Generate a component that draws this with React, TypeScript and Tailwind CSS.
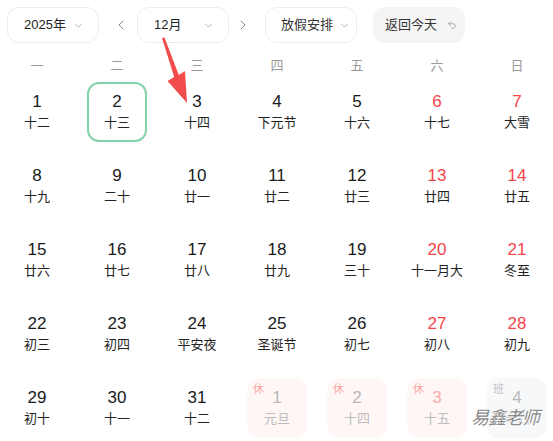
import { ChevronDown, ChevronLeft, ChevronRight, Undo2 } from "lucide-react";

type Day = {
    n: number;
    lunar: string;
    red?: boolean;
    selected?: boolean;
    tag?: "休" | "班";
};

const weekdays = ["一", "二", "三", "四", "五", "六", "日"];

const days: Day[] = [
    { n: 1, lunar: "十二" },
    { n: 2, lunar: "十三", selected: true },
    { n: 3, lunar: "十四" },
    { n: 4, lunar: "下元节" },
    { n: 5, lunar: "十六" },
    { n: 6, lunar: "十七", red: true },
    { n: 7, lunar: "大雪", red: true },
    { n: 8, lunar: "十九" },
    { n: 9, lunar: "二十" },
    { n: 10, lunar: "廿一" },
    { n: 11, lunar: "廿二" },
    { n: 12, lunar: "廿三" },
    { n: 13, lunar: "廿四", red: true },
    { n: 14, lunar: "廿五", red: true },
    { n: 15, lunar: "廿六" },
    { n: 16, lunar: "廿七" },
    { n: 17, lunar: "廿八" },
    { n: 18, lunar: "廿九" },
    { n: 19, lunar: "三十" },
    { n: 20, lunar: "十一月大", red: true },
    { n: 21, lunar: "冬至", red: true },
    { n: 22, lunar: "初三" },
    { n: 23, lunar: "初四" },
    { n: 24, lunar: "平安夜" },
    { n: 25, lunar: "圣诞节" },
    { n: 26, lunar: "初七" },
    { n: 27, lunar: "初八", red: true },
    { n: 28, lunar: "初九", red: true },
    { n: 29, lunar: "初十" },
    { n: 30, lunar: "十一" },
    { n: 31, lunar: "十二" },
];

const nextMonth: Day[] = [
    { n: 1, lunar: "元旦", tag: "休" },
    { n: 2, lunar: "十四", tag: "休" },
    { n: 3, lunar: "十五", tag: "休", red: true },
    { n: 4, lunar: "十六", tag: "班" },
];

export default function App() {
    return (
        <div className="relative h-[441px] w-[553px] overflow-hidden bg-white font-['Liberation_Sans','Noto_Sans_CJK_SC',sans-serif] text-[#222]">
            {/* TOOLBAR */}
            <div className="flex items-center pl-[7px] pt-[7px]">
                <Select label="2025年" />
                <ChevronLeft size={16} strokeWidth={1.5} className="ml-[14px] mr-[8px] text-[#888]" />
                <Select label="12月" />
                <ChevronRight size={16} strokeWidth={1.5} className="ml-[6px] mr-[14px] text-[#888]" />
                <button className="flex h-9 w-[92px] items-center rounded-xl border border-[#ececec] bg-white pl-[15px] text-[13px] text-[#333]">
                    放假安排
                    <ChevronDown size={13} strokeWidth={1.3} className="ml-[5px] text-[#999]" />
                </button>
                <button className="ml-4 flex h-9 w-[92px] items-center rounded-xl bg-[#f5f5f5] pl-3 text-[13px] text-[#333]">
                    返回今天
                    <Undo2 size={10} strokeWidth={1.8} className="ml-[10px] text-[#999]" />
                </button>
            </div>

            {/* WEEKDAYS */}
            <div className="-ml-[3px] mt-[14px] grid w-[560px] grid-cols-7 text-center text-[13px] leading-[18px] text-[#999]">
                {weekdays.map((w) => (
                    <span key={w}>{w}</span>
                ))}
            </div>

            {/* DAYS */}
            <div className="-ml-[3px] grid w-[560px] grid-cols-7">
                {days.map((d) => (
                    <div key={d.n} className="flex h-[74px] items-center justify-center">
                        <div
                            className={`flex h-[60px] w-[60px] flex-col items-center justify-center rounded-xl ${
                                d.selected ? "border-2 border-[#82d3aa]" : ""
                            }`}
                        >
                            <span className={`text-[17px] leading-5 ${d.red ? "text-[#f5454b]" : "text-[#1a1a1a]"}`}>
                                {d.n}
                            </span>
                            <span className="mt-[2px] text-[13px] leading-[18px] text-[#222]">{d.lunar}</span>
                        </div>
                    </div>
                ))}
                {nextMonth.map((d) => (
                    <div key={"n" + d.n} className="flex h-[74px] items-center justify-center">
                        <div
                            className={`relative flex h-[60px] w-[60px] flex-col items-center justify-center rounded-xl ${
                                d.tag === "休" ? "bg-[#fff7f6]" : "bg-[#f7f8fa]"
                            }`}
                        >
                            <span
                                className={`absolute left-[6px] top-[4px] text-[11px] leading-[14px] ${
                                    d.tag === "休" ? "text-[#f8a7a5]" : "text-[#c4c4c4]"
                                }`}
                            >
                                {d.tag}
                            </span>
                            <span className={`text-[17px] leading-5 ${d.red ? "text-[#fbaaaa]" : "text-[#b8b8b8]"}`}>
                                {d.n}
                            </span>
                            <span className="mt-[2px] text-[13px] leading-[18px] text-[#bdbdbd]">{d.lunar}</span>
                        </div>
                    </div>
                ))}
            </div>

            {/* annotation arrow */}
            <svg className="pointer-events-none absolute left-0 top-0" width="553" height="441">
                <polygon
                    points="162,38 164.5,37.5 178.8,75.1 185,71 187,103 167.5,81 174.2,76.9"
                    fill="#f24b4b"
                />
            </svg>

            {/* watermark */}
            <span className="pointer-events-none absolute left-[471px] top-[407px] text-[18px] italic leading-[22px] tracking-[-1px] text-[#8a8a8a] [text-shadow:0_0_2px_#fff,0_0_2px_#fff,0_0_2px_#fff]">
                易鑫老师
            </span>
        </div>
    );
}

function Select({ label }: { label: string }) {
    return (
        <button className="flex h-9 w-[92px] items-center justify-between rounded-xl border border-[#ececec] bg-white pl-4 pr-[13px] text-[13px] text-[#222]">
            {label}
            <ChevronDown size={13} strokeWidth={1.3} className="text-[#999]" />
        </button>
    );
}
